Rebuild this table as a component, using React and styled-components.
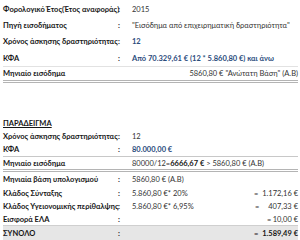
import React from 'react';
import styled, { createGlobalStyle, css } from 'styled-components';

const GlobalStyle = createGlobalStyle`
	*, *::before, *::after { box-sizing: border-box; }
	html, body { margin: 0; padding: 0; background: #ffffff; }
	body { font-family: 'Lato', 'Noto Sans', sans-serif; }
`;

const Page = styled.div`
	width: 300px;
	height: 240px;
	padding: 1px 2px 0 3px;
	overflow: hidden;
	display: flex;
	flex-direction: column;
	font-size: 7.5px;
	color: #161616;
`;

const Section = styled.div`
	display: flex;
	flex-direction: column;
	margin-top: ${(p) => p.$gap || 0}px;
`;

const Row = styled.div`
	display: grid;
	grid-template-columns: 115px 14px 1fr;
	align-items: center;
	height: ${(p) => p.$h || 16}px;
	${(p) => p.$topLine && css`border-top: 1px solid #e2e2e2;`}
	${(p) => p.$line && css`border-bottom: 1px solid #c8c8c8;`}
	${(p) => p.$double && css`border-bottom: 3px double #b4b4b4;`}
	${(p) => p.$shade && css`background: #e6e6e6; border-top: 1px solid #cfcfcf;`}
`;

const Label = styled.span`
	font-weight: 700;
	white-space: nowrap;
`;

const Colon = styled.span`
	font-weight: 700;
	text-align: left;
`;

const Value = styled.span`
	white-space: nowrap;
	color: ${(p) => (p.$blue ? '#2a4b7c' : '#333333')};
	font-weight: ${(p) => (p.$bold ? 700 : 400)};
	${(p) => p.$wide && css`grid-column: 2 / 4;`}
	${(p) => p.$right && css`text-align: right;`}
`;

const Split = styled.span`
	display: flex;
	justify-content: space-between;
	align-items: center;
	white-space: nowrap;
	color: #333333;
`;

const Result = styled.span`
	display: flex;
	justify-content: space-between;
	width: ${(p) => p.$w}px;
	font-weight: ${(p) => (p.$bold ? 700 : 400)};
	color: ${(p) => (p.$bold ? '#161616' : '#333333')};
`;

const Heading = styled.span`
	font-weight: 700;
	text-decoration: underline;
	text-underline-offset: 1px;
`;

const Strong = styled.b`
	color: #161616;
`;

export default function App() {
	return (
		<>
			<GlobalStyle />
			<Page>
				<Section>
					<Row>
						<Label>Φορολογικό Έτος(Έτος αναφοράς)</Label>
						<Colon>:</Colon>
						<Value>2015</Value>
					</Row>
					<Row>
						<Label>Πηγή εισοδήματος</Label>
						<Colon>:</Colon>
						<Value>"Εισόδημα από επιχειρηματική δραστηριότητα"</Value>
					</Row>
					<Row $h={17}>
						<Label>Χρόνος άσκησης δραστηριότητας</Label>
						<Colon>:</Colon>
						<Value $blue $bold>12</Value>
					</Row>
					<Row>
						<Label>ΚΦΑ</Label>
						<Colon>:</Colon>
						<Value $blue $bold>Από 70.329,61 € (12 * 5.860,80 €) και άνω</Value>
					</Row>
					<Row $h={17} $topLine $double>
						<Label>Μηνιαίο εισόδημα</Label>
						<Value $wide $right>5860,80 € "Ανώτατη Βάση" (Α.Β)</Value>
					</Row>
				</Section>

				<Section $gap={34}>
					<Row $h={13}>
						<Heading>ΠΑΡΑΔΕΙΓΜΑ</Heading>
					</Row>
					<Row $h={13}>
						<Label>Χρόνος άσκησης δραστηριότητας</Label>
						<Colon>:</Colon>
						<Value>12</Value>
					</Row>
					<Row $h={14} $line>
						<Label>ΚΦΑ</Label>
						<Colon>:</Colon>
						<Value $blue $bold>80.000,00 €</Value>
					</Row>
					<Row $h={15} $double>
						<Label>Μηνιαίο εισόδημα</Label>
						<span />
						<Value>
							80000/12=<Strong>6666,67 €</Strong> &gt; 5860,80 € (Α.Β)
						</Value>
					</Row>
					<Row $h={14}>
						<Label>Μηνιαία βάση υπολογισμού</Label>
						<Colon>:</Colon>
						<Value>5860,80 € (Α.Β)</Value>
					</Row>
					<Row $h={14}>
						<Label>Κλάδος Σύνταξης</Label>
						<Colon>:</Colon>
						<Split>
							<span>5.860,80 €* 20%</span>
							<Result $w={44}>
								<span>=</span>
								<span>1.172,16 €</span>
							</Result>
						</Split>
					</Row>
					<Row $h={13}>
						<Label>Κλάδος Υγειονομικής περίθαλψης</Label>
						<Colon>:</Colon>
						<Split>
							<span>5.860,80 €* 6,95%</span>
							<Result $w={43}>
								<span>=</span>
								<span>407,33 €</span>
							</Result>
						</Split>
					</Row>
					<Row $h={12}>
						<Label>Εισφορά ΕΛΑ</Label>
						<Colon>:</Colon>
						<Split>
							<span />
							<Result $w={31}>
								<span>=</span>
								<span>10,00 €</span>
							</Result>
						</Split>
					</Row>
					<Row $h={15} $shade>
						<Label>ΣΥΝΟΛΟ</Label>
						<Colon>:</Colon>
						<Split>
							<span />
							<Result $w={44} $bold>
								<span>=</span>
								<span>1.589,49 €</span>
							</Result>
						</Split>
					</Row>
				</Section>
			</Page>
		</>
	);
}
